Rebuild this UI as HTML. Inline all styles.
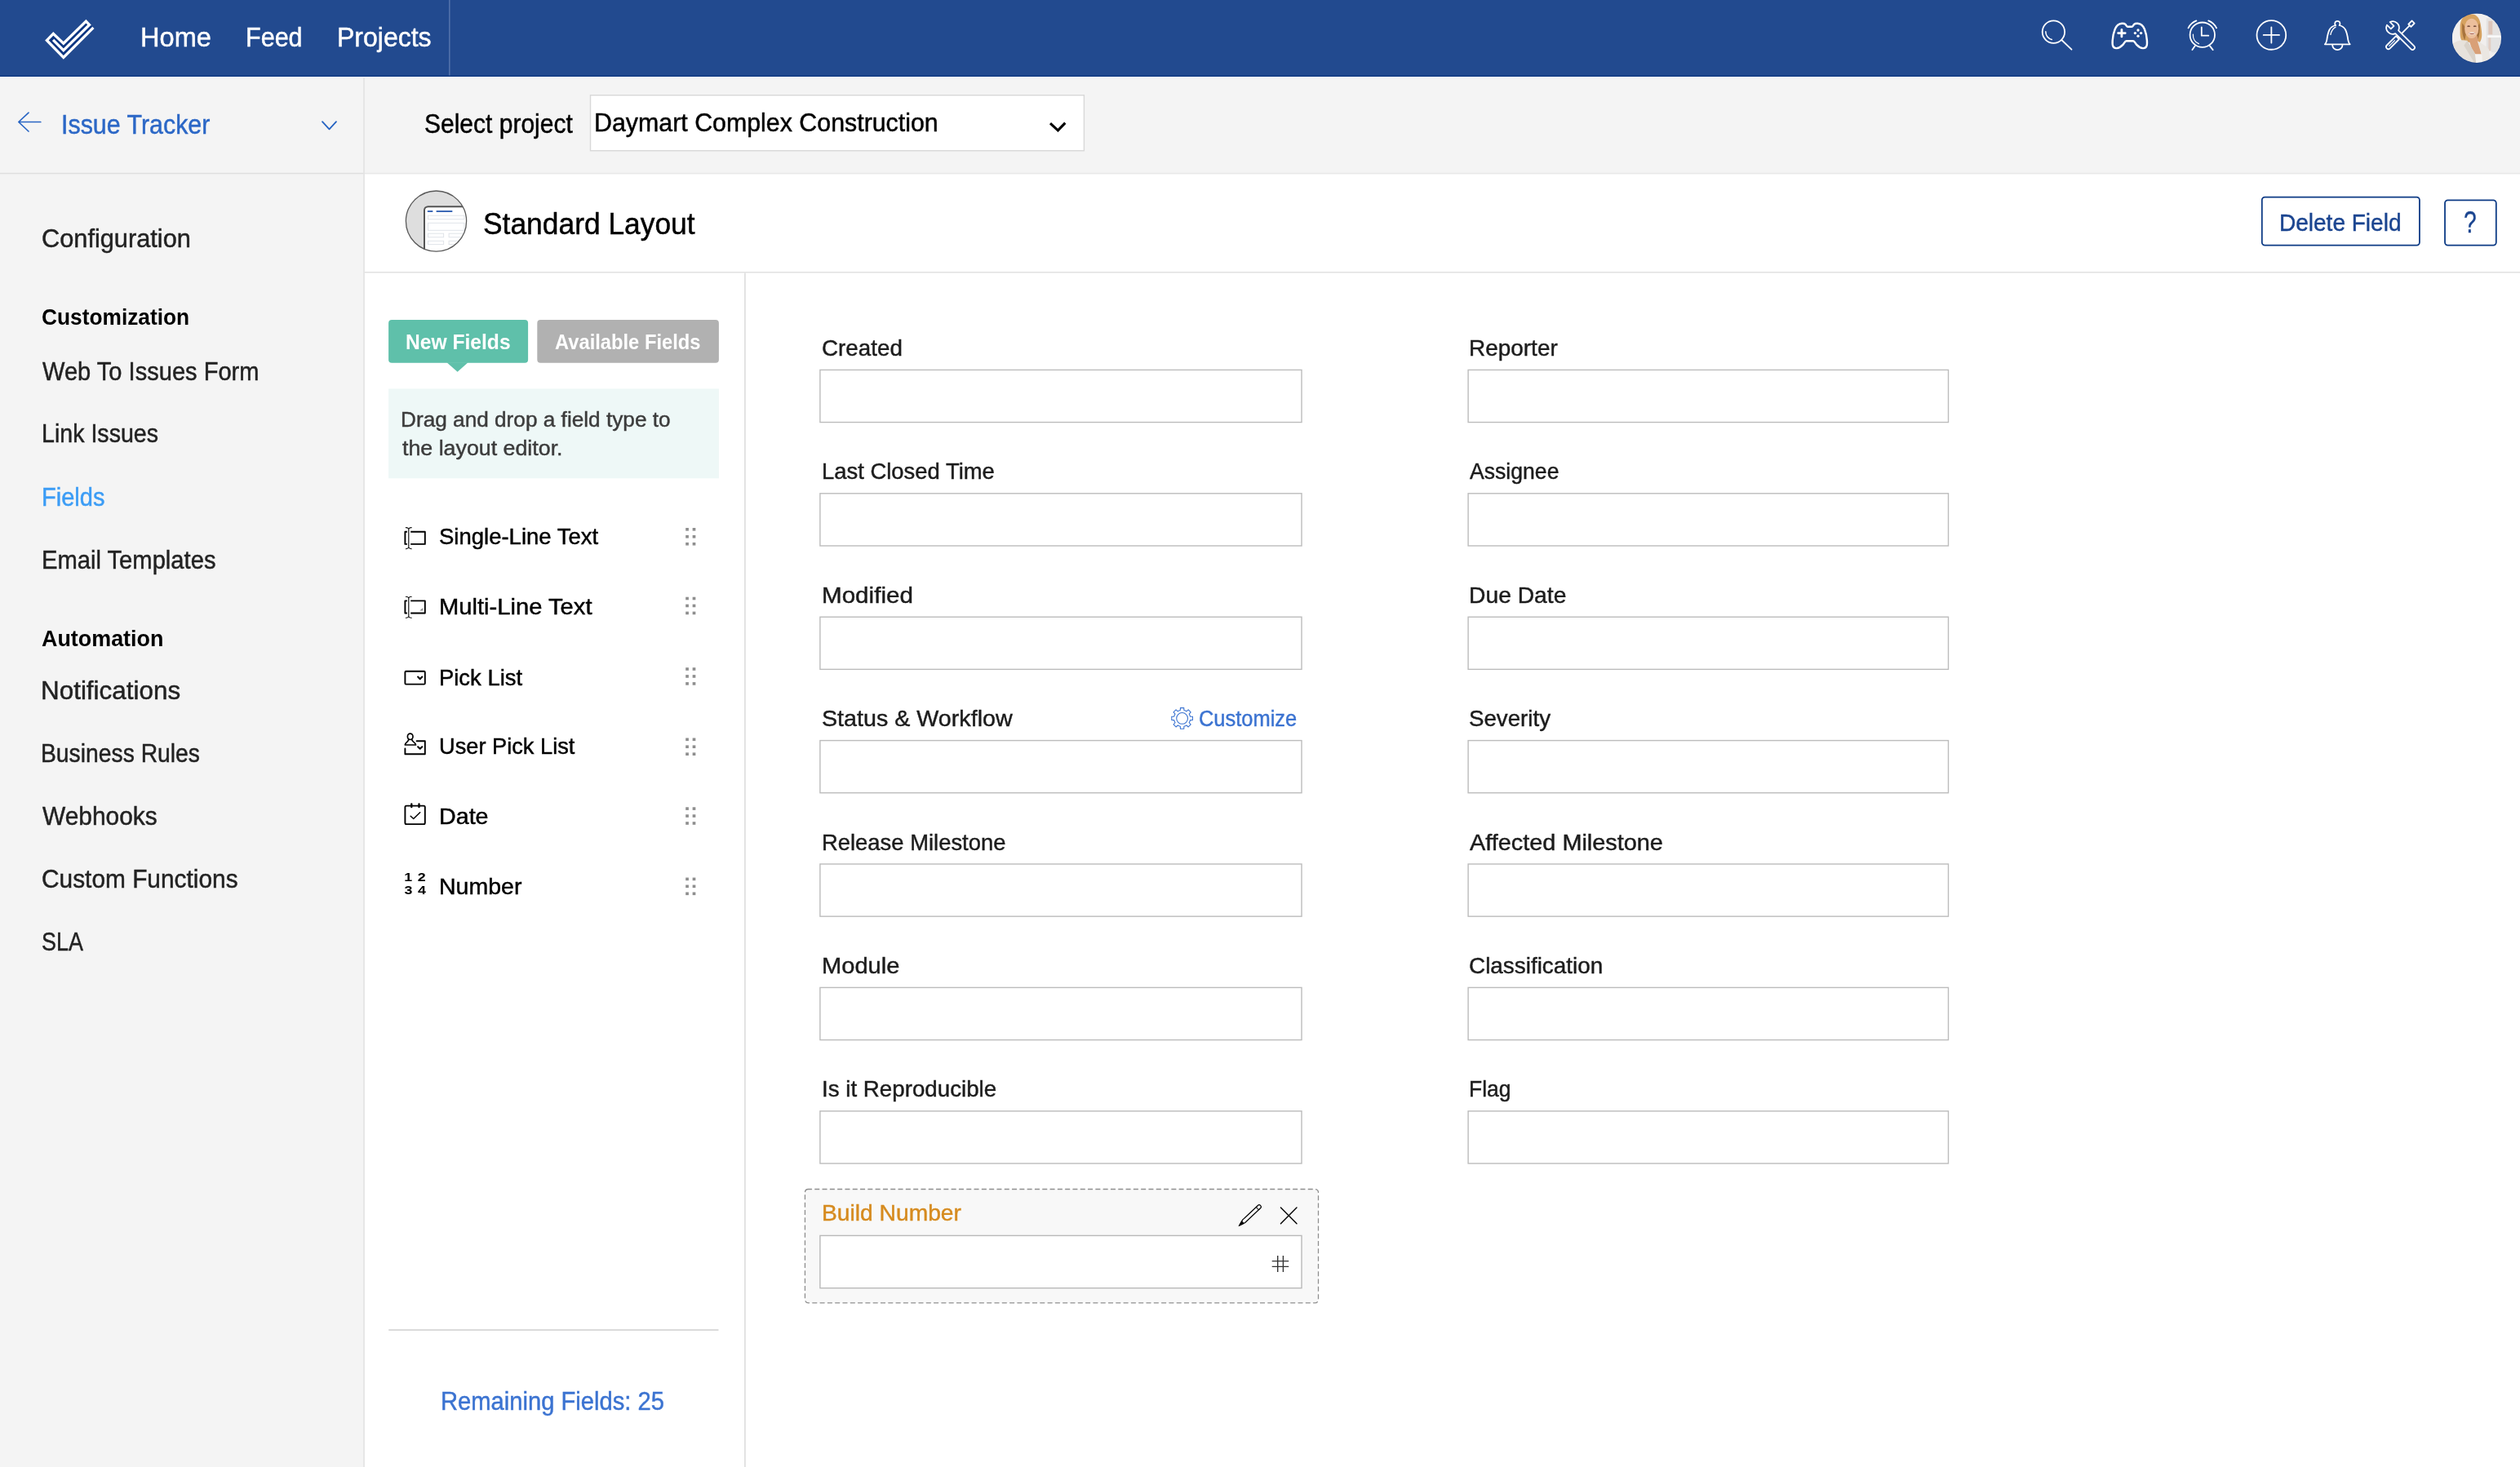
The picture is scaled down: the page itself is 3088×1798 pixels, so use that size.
<!DOCTYPE html>
<html lang="en"><head><meta charset="utf-8"><title>Standard Layout - Issue Tracker</title>
<style>
*{box-sizing:border-box;margin:0;padding:0}
html,body{width:3088px;height:1798px;overflow:hidden;background:#fff}
body{position:relative;font-family:"Liberation Sans",sans-serif}
.t{position:absolute;white-space:nowrap;line-height:1;transform-origin:0 0;-webkit-text-stroke:0.45px currentColor}
.b{-webkit-text-stroke:0}
svg{position:absolute;overflow:visible}
#txt{position:absolute;left:0;top:0;width:3088px;height:1798px;will-change:transform}
ul{list-style:none}
h1,h2{font-size:inherit;font-weight:inherit}
</style></head>
<body>
<svg style="left:0;top:0" width="3088" height="1798" viewBox="0 0 3088 1798" fill="none">
<rect x="0" y="0" width="3088" height="1798" fill="#f4f4f4"/>
<rect x="0" y="0" width="3088" height="94" fill="#224a8f"/>
<rect x="0" y="92.4" width="3088" height="1.6" fill="#123b84"/>
<rect x="0" y="94" width="3088" height="1.3" fill="#fdfdfd"/>
<rect x="550.1" y="0" width="1.4" height="92.4" fill="#5877ae"/>
<rect x="446.8" y="213.3" width="2642" height="1585" fill="#fff"/>
<rect x="0" y="211.8" width="446" height="1.5" fill="#dfdfdf"/>
<rect x="446" y="211.8" width="2642" height="1.5" fill="#e8e8e8"/>
<rect x="445.2" y="95.3" width="1.6" height="1703" fill="#e3e3e3"/>
<rect x="446.8" y="333" width="2642" height="1.5" fill="#e1e1e1"/>
<rect x="912.1" y="334.5" width="1.6" height="1464" fill="#dddddd"/>
<rect x="723.5" y="116.7" width="604.9" height="68" fill="#fff" stroke="#d8d8d8" stroke-width="1.4"/>
<rect x="2771.8" y="241.7" width="193.1" height="58.9" rx="3.6" fill="#fff" stroke="#0d3b85" stroke-width="1.8"/>
<rect x="2996" y="245.3" width="62.8" height="55.3" rx="3.6" fill="#fff" stroke="#0d3b85" stroke-width="1.8"/>
<rect x="476.1" y="391.9" width="171" height="52.8" rx="4" fill="#5fc0aa"/>
<path d="M547.5 444.2 L573.5 444.2 L560.6 455.8 Z" fill="#5fc0aa"/>
<rect x="658.3" y="391.9" width="222.6" height="52.8" rx="4" fill="#b1b1b1"/>
<rect x="476.1" y="476.4" width="404.8" height="109.9" fill="#eef8f7"/>
<rect x="476.2" y="1629.3" width="404.3" height="1.5" fill="#cfcfcf"/>
<rect x="1004.9" y="453.40" width="590.1" height="64.15" fill="#fff" stroke="#bcbcbc" stroke-width="1.4"/>
<rect x="1799.1" y="453.40" width="588.4" height="64.15" fill="#fff" stroke="#bcbcbc" stroke-width="1.4"/>
<rect x="1004.9" y="604.80" width="590.1" height="64.15" fill="#fff" stroke="#bcbcbc" stroke-width="1.4"/>
<rect x="1799.1" y="604.80" width="588.4" height="64.15" fill="#fff" stroke="#bcbcbc" stroke-width="1.4"/>
<rect x="1004.9" y="756.20" width="590.1" height="64.15" fill="#fff" stroke="#bcbcbc" stroke-width="1.4"/>
<rect x="1799.1" y="756.20" width="588.4" height="64.15" fill="#fff" stroke="#bcbcbc" stroke-width="1.4"/>
<rect x="1004.9" y="907.60" width="590.1" height="64.15" fill="#fff" stroke="#bcbcbc" stroke-width="1.4"/>
<rect x="1799.1" y="907.60" width="588.4" height="64.15" fill="#fff" stroke="#bcbcbc" stroke-width="1.4"/>
<rect x="1004.9" y="1059.00" width="590.1" height="64.15" fill="#fff" stroke="#bcbcbc" stroke-width="1.4"/>
<rect x="1799.1" y="1059.00" width="588.4" height="64.15" fill="#fff" stroke="#bcbcbc" stroke-width="1.4"/>
<rect x="1004.9" y="1210.40" width="590.1" height="64.15" fill="#fff" stroke="#bcbcbc" stroke-width="1.4"/>
<rect x="1799.1" y="1210.40" width="588.4" height="64.15" fill="#fff" stroke="#bcbcbc" stroke-width="1.4"/>
<rect x="1004.9" y="1361.80" width="590.1" height="64.15" fill="#fff" stroke="#bcbcbc" stroke-width="1.4"/>
<rect x="1799.1" y="1361.80" width="588.4" height="64.15" fill="#fff" stroke="#bcbcbc" stroke-width="1.4"/>
<rect x="986.45" y="1457.5" width="629.05" height="139.4" rx="4" fill="#f8f8f8" stroke="#8f8f8f" stroke-width="1.3" stroke-dasharray="6 3.3" stroke-dashoffset="1.5"/>
<rect x="1004.9" y="1514.4" width="590.1" height="64.3" fill="#fff" stroke="#b9b9b9" stroke-width="1.4"/>
</svg>
<svg style="left:0;top:0;will-change:transform" width="3088" height="1798" viewBox="0 0 3088 1798" fill="none" stroke-linecap="round" stroke-linejoin="round">
<polygon points="114.4,33.9 77.8,70.4 57.4,49.4 65.3,41.4 77.8,53.3 105.4,26.1 109.5,30.4" fill="#0d3682"/>
<polyline points="114.4,33.9 77.8,70.4 57.4,49.4 65.3,41.4 77.8,53.3 105.4,26.1 109.5,30.4 77.8,61.6 65.05,48.9" stroke="#fff" stroke-width="3.3" stroke-linejoin="miter" stroke-linecap="butt" stroke-miterlimit="10"/>
<g stroke="#fff" stroke-width="1.8">
<circle cx="2516.4" cy="39.1" r="13.7"/><path d="M2526.3 49 L2538.5 60.7"/><path d="M2506.8 38.8 A9.6 9.6 0 0 0 2514.3 48.4" stroke-width="1.5"/>
<path stroke-width="2.4" d="M2600.1 28.8 C2602 28.6 2603.5 28.9 2604.5 29.8 C2605.5 30.8 2606 32.8 2607.5 32.8 L2612.1 32.8 C2613.6 32.8 2614.1 30.8 2615.1 29.8 C2616.1 28.9 2617.6 28.6 2619.5 28.8 C2623.5 29.2 2626.3 31.8 2627.9 35.8 C2629.6 40 2630.6 45 2630.9 49.7 C2631.1 52.6 2631.2 54.8 2630.4 56.6 C2629.6 58.4 2627.9 59.3 2625.9 59.1 C2622.9 58.8 2620.2 56.9 2618 54.6 C2616.5 53 2615.7 50.2 2614 50.2 L2605.6 50.2 C2603.9 50.2 2603.1 53 2601.6 54.6 C2599.4 56.9 2596.7 58.8 2593.7 59.1 C2591.7 59.3 2590 58.4 2589.2 56.6 C2588.4 54.8 2588.5 52.6 2588.7 49.7 C2589 45 2590 40 2591.7 35.8 C2593.3 31.8 2596.1 29.2 2600.1 28.8 Z"/>
<path stroke-width="2.8" d="M2595.6 40.6 L2604.2 40.6 M2599.9 36.3 L2599.9 44.9"/>
<g fill="#fff" stroke="none"><circle cx="2620" cy="37" r="1.65"/><circle cx="2620" cy="44.2" r="1.65"/><circle cx="2616.4" cy="40.6" r="1.65"/><circle cx="2623.6" cy="40.6" r="1.65"/></g>
<circle cx="2698.8" cy="42.7" r="15.2"/><path d="M2681.5 34.3 A19 19 0 0 1 2691.4 25.4 M2706.2 25.4 A19 19 0 0 1 2716.1 34.3"/>
<path d="M2689.6 56.4 L2686.4 61.1 M2708 56.4 L2711.7 61.1 M2697.8 33.3 L2697.8 43.7 L2706.3 43.7"/><path d="M2687.4 42.2 A11.5 11.5 0 0 0 2694.4 53.7" stroke-width="1.3"/>
<circle cx="2783.35" cy="42.9" r="17.85" stroke-width="1.8"/><path stroke-width="1.8" d="M2773.7 42.9 L2793 42.9 M2783.35 33.3 L2783.35 52.6"/>
<path d="M2861.9 31 C2858 32 2855.8 33.8 2854.5 36.5 C2852.5 40.5 2851.8 45 2851.3 49 C2851 51.3 2850.6 52.3 2848.9 54.3 L2879.7 54.3 C2878 52.3 2877.6 51.3 2877.3 49 C2876.8 45 2876.1 40.5 2874.1 36.5 C2872.8 33.8 2870.6 32 2866.7 31"/>
<path d="M2861.9 31 C2860.6 29.5 2860.8 25.9 2864.3 25.9 C2867.8 25.9 2868 29.5 2866.7 31"/>
<path d="M2858.1 55.1 A6.2 6 0 0 0 2870.5 55.1"/><path stroke-width="1.4" d="M2862 33.2 C2858.3 35.4 2856.6 39 2855.9 42.4"/>
<g transform="translate(2926.7 57.4) rotate(-45)"><path d="M0 -2.7 L16 -2.7 L16 2.7 L0 2.7 A2.7 2.7 0 0 1 0 -2.7 Z"/><path stroke-width="1.2" d="M1.5 0 L11 0"/><path d="M16 0 L37 0"/><rect x="37" y="-2.2" width="6" height="4.4"/></g>
<g transform="translate(2932 34) rotate(45)"><path fill="#224a8f" d="M-7.36 -2.6 L-0.5 -2.6 L-0.5 2.6 L-7.36 2.6 A7.8 7.8 0 0 0 7.32 2.7 L34.3 2.7 A2.7 2.7 0 0 0 34.3 -2.7 L7.32 -2.7 A7.8 7.8 0 0 0 -7.36 -2.6 Z"/></g>
</g>
<defs><filter id="bl" x="-5%" y="-5%" width="110%" height="110%"><feGaussianBlur stdDeviation="0.55"/></filter><clipPath id="av"><circle cx="3034.9" cy="46.7" r="30.2"/></clipPath><clipPath id="lay"><circle cx="534.5" cy="271.1" r="37.5"/></clipPath></defs>
<circle cx="3034.9" cy="46.7" r="31" fill="#1a4187" stroke="none"/>
<g clip-path="url(#av)" stroke="none"><g transform="translate(3004.8 16.3)" filter="url(#bl)">
<rect x="0" y="0" width="61" height="61" fill="#f1efee"/>
<rect x="42" y="6" width="19" height="40" fill="#e4e2e1"/><rect x="44.5" y="9.5" width="5" height="16.5" fill="#dcc6ba"/><rect x="43" y="27" width="18" height="2.6" fill="#fafafa"/><rect x="44.5" y="30" width="3" height="16" fill="#e2cfc4"/><rect x="48" y="30" width="13" height="18" fill="#e3e3e3"/>
<path d="M23 1 C14 1 9.5 8 9.8 18 C10 26 9 31 13.5 35.5 L34 35.5 C37.5 30 36.5 24 35.5 17 C34.5 7 31 1 23 1 Z" fill="#d6a260"/>
<path d="M12.5 12 C11.5 20 12.5 28 15.5 33 L18 20 Z" fill="#a8733c"/><path d="M33.5 12 C34.5 20 33.5 28 31 33 L29.5 20 Z" fill="#9c6a38"/>
<path d="M19 28 L31 28 L36.5 52 L27 52 Z" fill="#d9a077"/>
<ellipse cx="23.9" cy="18.6" rx="8.6" ry="12.2" fill="#ecbf9c"/>
<ellipse cx="24.3" cy="24.6" rx="4.3" ry="1.7" fill="#f7efe9"/><path d="M19.6 23.6 Q24.3 28.5 29 23.6 Q24.3 25.4 19.6 23.6Z" fill="#b06a55"/>
<ellipse cx="20.3" cy="15.9" rx="1.9" ry="0.9" fill="#7a5140"/><ellipse cx="27.9" cy="15.9" rx="1.9" ry="0.9" fill="#7a5140"/>
<path d="M0 38 C6 33 12 32 18.5 33.5 L29 51 L31 61 L0 61 Z" fill="#e7e2dc"/><path d="M31 34 C35 36 40 39 45 44 L47 61 L36 61 L36.5 52 Z" fill="#ebe7e2"/>
<path d="M14.5 39.5 L18.5 33.5 L29 51 L30 61 L27.5 61 Z" fill="#d9d2c9"/><path d="M28 50 L36.5 50 L37 61 L29.5 61 Z" fill="#f4f3f1"/>
</g></g>
<path d="M35 138.1 L22.8 149.5 L35 161 M23.6 149.5 L49.8 149.5" stroke="#2a66c4" stroke-width="1.7"/>
<path d="M395 149.2 L403.5 158.4 L412 149.2" stroke="#2563c2" stroke-width="1.8"/>
<path d="M1287 151.2 L1296.4 159.9 L1305.3 150.6" stroke="#000" stroke-width="3.1" stroke-linecap="butt" stroke-linejoin="miter"/>
<circle cx="534.5" cy="271.1" r="37.5" fill="#dedede" stroke="none"/>
<g clip-path="url(#lay)"><rect x="520" y="253.2" width="80" height="80" rx="4.5" fill="#fff" stroke="#555" stroke-width="2"/>
<path d="M524.6 259 L529.6 259 M535.4 259 L553.6 259" stroke="#3d69b6" stroke-width="1.9"/>
<g stroke="#e0e4e9" stroke-width="1" stroke-linejoin="miter"><rect x="524.5" y="264.2" width="44.4" height="4.5"/><rect x="524.5" y="273.3" width="44.4" height="9"/><rect x="524.5" y="286.2" width="19.1" height="4.5"/><rect x="550.1" y="286.2" width="25" height="4.5"/><rect x="524.5" y="295.3" width="19.1" height="4.3"/><rect x="550.1" y="295.3" width="25" height="4.3"/></g></g>
<circle cx="534.5" cy="271.1" r="37.1" stroke="#5a5a5a" stroke-width="1.3"/>
<g stroke="#000" stroke-width="1.9" transform="translate(0 0.0)"><path d="M498.9 651.8 L496.4 651.8 L496.4 666.9 L498.9 666.9 M503.2 651.8 L520.8 651.8 L520.8 666.9 L503.2 666.9" stroke-linecap="butt"/><path stroke-width="1.1" d="M500.8 648 L500.8 671.3 M497.4 646.6 Q500 646.7 500.8 648.2 Q501.6 646.7 504.2 646.6 M497.4 672.7 Q500 672.6 500.8 671.1 Q501.6 672.6 504.2 672.7"/></g>
<g stroke="#000" stroke-width="1.9" transform="translate(0 84.6)"><path d="M498.9 651.8 L496.4 651.8 L496.4 666.9 L498.9 666.9 M503.2 651.8 L520.8 651.8 L520.8 666.9 L503.2 666.9" stroke-linecap="butt"/><path stroke-width="1.1" d="M500.8 648 L500.8 671.3 M497.4 646.6 Q500 646.7 500.8 648.2 Q501.6 646.7 504.2 646.6 M497.4 672.7 Q500 672.6 500.8 671.1 Q501.6 672.6 504.2 672.7"/><path d="M518.2 660.3 L518.2 663.9 L514.3 663.9 Z" fill="#8a8a8a" stroke="none"/></g>
<g stroke="#000" stroke-width="1.9">
<rect x="496.4" y="822.7" width="24.4" height="15.9" rx="1.2"/><path stroke-width="2" d="M512.1 829.5 L514.7 832.2 L517.3 829.5"/>
<ellipse cx="502.7" cy="902.8" rx="3.3" ry="3.7" stroke-width="1.7"/><path stroke-width="1.7" d="M500.8 906 C500.9 909.6 496.9 909 496.3 913 L509.5 913 C508.9 909 504.5 909.6 504.6 906"/>
<path d="M510.6 908.2 L520.8 908.2 L520.8 924.3 L496.4 924.3 L496.4 917.5"/><path stroke-width="2" d="M512.1 915.2 L514.7 917.8 L517.3 915.2"/>
<rect x="496.4" y="987.6" width="24.4" height="22.5" rx="1.6"/><path stroke-width="2.3" d="M504.3 985.4 L504.3 989.2 M513.5 985.4 L513.5 989.2"/><path stroke-width="1.5" d="M503.2 1000.3 L506.7 1003.5 L514.7 995.8"/>
</g>
<g fill="#000" stroke="none" font-family="Liberation Sans, sans-serif" font-weight="700" font-size="15.4" text-anchor="middle">
<text transform="translate(500.3 1079.6) scale(1.16 0.9)">1</text>
<text transform="translate(516.75 1079.6) scale(1.16 0.9)">2</text>
<text transform="translate(500.4 1095.6) scale(1.16 0.9)">3</text>
<text transform="translate(516.85 1095.6) scale(1.16 0.9)">4</text>
</g>
<g fill="#8e8e8e" stroke="none">
<rect x="840.20" y="647.00" width="3.7" height="3.6"/>
<rect x="848.65" y="647.00" width="3.7" height="3.6"/>
<rect x="840.20" y="655.95" width="3.7" height="3.6"/>
<rect x="848.65" y="655.95" width="3.7" height="3.6"/>
<rect x="840.20" y="664.90" width="3.7" height="3.6"/>
<rect x="848.65" y="664.90" width="3.7" height="3.6"/>
<rect x="840.20" y="731.70" width="3.7" height="3.6"/>
<rect x="848.65" y="731.70" width="3.7" height="3.6"/>
<rect x="840.20" y="740.65" width="3.7" height="3.6"/>
<rect x="848.65" y="740.65" width="3.7" height="3.6"/>
<rect x="840.20" y="749.60" width="3.7" height="3.6"/>
<rect x="848.65" y="749.60" width="3.7" height="3.6"/>
<rect x="840.20" y="818.20" width="3.7" height="3.6"/>
<rect x="848.65" y="818.20" width="3.7" height="3.6"/>
<rect x="840.20" y="827.15" width="3.7" height="3.6"/>
<rect x="848.65" y="827.15" width="3.7" height="3.6"/>
<rect x="840.20" y="836.10" width="3.7" height="3.6"/>
<rect x="848.65" y="836.10" width="3.7" height="3.6"/>
<rect x="840.20" y="904.50" width="3.7" height="3.6"/>
<rect x="848.65" y="904.50" width="3.7" height="3.6"/>
<rect x="840.20" y="913.45" width="3.7" height="3.6"/>
<rect x="848.65" y="913.45" width="3.7" height="3.6"/>
<rect x="840.20" y="922.40" width="3.7" height="3.6"/>
<rect x="848.65" y="922.40" width="3.7" height="3.6"/>
<rect x="840.20" y="989.30" width="3.7" height="3.6"/>
<rect x="848.65" y="989.30" width="3.7" height="3.6"/>
<rect x="840.20" y="998.25" width="3.7" height="3.6"/>
<rect x="848.65" y="998.25" width="3.7" height="3.6"/>
<rect x="840.20" y="1007.20" width="3.7" height="3.6"/>
<rect x="848.65" y="1007.20" width="3.7" height="3.6"/>
<rect x="840.20" y="1075.60" width="3.7" height="3.6"/>
<rect x="848.65" y="1075.60" width="3.7" height="3.6"/>
<rect x="840.20" y="1084.55" width="3.7" height="3.6"/>
<rect x="848.65" y="1084.55" width="3.7" height="3.6"/>
<rect x="840.20" y="1093.50" width="3.7" height="3.6"/>
<rect x="848.65" y="1093.50" width="3.7" height="3.6"/>
</g>
<path d="M1446.33 870.56 L1446.45 867.58 L1450.75 867.58 L1450.87 870.56 A10.1 10.1 0 0 1 1453.95 871.83 L1456.15 869.82 L1459.18 872.85 L1457.17 875.05 A10.1 10.1 0 0 1 1458.44 878.13 L1461.42 878.25 L1461.42 882.55 L1458.44 882.67 A10.1 10.1 0 0 1 1457.17 885.75 L1459.18 887.95 L1456.15 890.98 L1453.95 888.97 A10.1 10.1 0 0 1 1450.87 890.24 L1450.75 893.22 L1446.45 893.22 L1446.33 890.24 A10.1 10.1 0 0 1 1443.25 888.97 L1441.05 890.98 L1438.02 887.95 L1440.03 885.75 A10.1 10.1 0 0 1 1438.76 882.67 L1435.78 882.55 L1435.78 878.25 L1438.76 878.13 A10.1 10.1 0 0 1 1440.03 875.05 L1438.02 872.85 L1441.05 869.82 L1443.25 871.83 A10.1 10.1 0 0 1 1446.33 870.56Z" stroke="#3b73d1" stroke-width="1.1"/><circle cx="1448.6" cy="880.4" r="6.9" stroke="#3b73d1" stroke-width="1.1"/>
<g transform="translate(1518.8 1501.9) rotate(-43.3)" stroke="#000" stroke-width="1.2"><path d="M0 0 L7.4 -2.3 L33.2 -2.3 A2.3 2.3 0 0 1 33.2 2.3 L7.4 2.3 Z" stroke-linejoin="miter"/><path d="M0 0 L5.4 -1.7 L5.4 1.7 Z" fill="#000"/><path d="M31.3 -2.3 A1.2 2.3 0 0 0 31.3 2.3" stroke-width="1"/></g>
<path d="M1569.4 1480 L1589 1499.8 M1589 1480 L1569.4 1499.8" stroke="#000" stroke-width="1.4"/>
<path d="M1565.7 1538.9 L1565.7 1559 M1572.4 1538.9 L1572.4 1559 M1558.7 1545.6 L1579.2 1545.6 M1558.7 1552.4 L1579.2 1552.4" stroke="#333" stroke-width="1.4" stroke-linecap="butt"/>
</svg>
<div id="txt">
<nav><a class="t" style="left:171.51px;top:29.07px;font-size:33px;font-weight:400;color:#ffffff;transform:scaleX(0.9875)">Home</a><a class="t" style="left:300.93px;top:29.07px;font-size:33px;font-weight:400;color:#ffffff;transform:scaleX(0.9251)">Feed</a><a class="t" style="left:413.31px;top:29.07px;font-size:33px;font-weight:400;color:#ffffff;transform:scaleX(0.9694)">Projects</a></nav>
<aside><a class="t" style="left:75.14px;top:135.87px;font-size:33px;font-weight:400;color:#2b67c6;transform:scaleX(0.9207)">Issue Tracker</a><a class="t" style="left:50.81px;top:277.10px;font-size:30.6px;font-weight:400;color:#222222;transform:scaleX(1.0048)">Configuration</a><h2><span class="t b" style="left:50.85px;top:375.20px;font-size:28px;font-weight:700;color:#000000;transform:scaleX(0.9392)">Customization</span></h2><a class="t" style="left:52.20px;top:439.50px;font-size:30.6px;font-weight:400;color:#222222;transform:scaleX(0.9502)">Web To Issues Form</a><a class="t" style="left:50.69px;top:516.40px;font-size:30.6px;font-weight:400;color:#222222;transform:scaleX(0.9346)">Link Issues</a><a class="t" style="left:50.66px;top:593.50px;font-size:30.6px;font-weight:400;color:#3b9cf5;transform:scaleX(0.9484)">Fields</a><a class="t" style="left:50.64px;top:670.60px;font-size:30.6px;font-weight:400;color:#222222;transform:scaleX(0.9536)">Email Templates</a><h2><span class="t b" style="left:51.03px;top:769.00px;font-size:28px;font-weight:700;color:#000000;transform:scaleX(0.9604)">Automation</span></h2><a class="t" style="left:50.16px;top:830.70px;font-size:30.6px;font-weight:400;color:#222222;transform:scaleX(1.0270)">Notifications</a><a class="t" style="left:50.42px;top:907.90px;font-size:30.6px;font-weight:400;color:#222222;transform:scaleX(0.9247)">Business Rules</a><a class="t" style="left:52.00px;top:984.70px;font-size:30.6px;font-weight:400;color:#222222;transform:scaleX(0.9774)">Webhooks</a><a class="t" style="left:50.66px;top:1062.10px;font-size:30.6px;font-weight:400;color:#222222;transform:scaleX(0.9757)">Custom Functions</a><a class="t" style="left:50.94px;top:1139.30px;font-size:30.6px;font-weight:400;color:#222222;transform:scaleX(0.8797)">SLA</a></aside>
<header><label class="t" style="left:519.70px;top:135.99px;font-size:32.5px;font-weight:400;color:#000000;transform:scaleX(0.9233)">Select project</label><span class="t" style="left:728.05px;top:134.56px;font-size:31px;font-weight:400;color:#000000;transform:scaleX(0.9792)">Daymart Complex Construction</span><h1><span class="t" style="left:592.46px;top:256.53px;font-size:36px;font-weight:400;color:#000000;transform:scaleX(0.9827)">Standard Layout</span></h1><span class="t" style="left:2792.94px;top:258.55px;font-size:29px;font-weight:400;color:#1b4590;transform:scaleX(0.9660)">Delete Field</span><span class="t" style="left:3018.62px;top:255.03px;font-size:36px;font-weight:400;color:#1b4590;transform:scaleX(0.7813)">?</span></header>
<section><a class="t b" style="left:497.04px;top:405.77px;font-size:26.5px;font-weight:700;color:#ffffff;transform:scaleX(0.9288)">New Fields</a><a class="t b" style="left:679.51px;top:405.77px;font-size:26.5px;font-weight:700;color:#ffffff;transform:scaleX(0.8954)">Available Fields</a><p><span class="t" style="left:490.89px;top:502.24px;font-size:25.7px;font-weight:400;color:#3c3c3c;transform:scaleX(1.0199)">Drag and drop a field type to</span><span class="t" style="left:492.65px;top:537.44px;font-size:25.7px;font-weight:400;color:#3c3c3c;transform:scaleX(1.0426)">the layout editor.</span></p><ul><li><span class="t" style="left:538.41px;top:644.14px;font-size:27.6px;font-weight:400;color:#000000;transform:scaleX(0.9967)">Single-Line Text</span></li><li><span class="t" style="left:537.64px;top:729.94px;font-size:27.6px;font-weight:400;color:#000000;transform:scaleX(1.0571)">Multi-Line Text</span></li><li><span class="t" style="left:537.79px;top:816.84px;font-size:27.6px;font-weight:400;color:#000000;transform:scaleX(0.9934)">Pick List</span></li><li><span class="t" style="left:537.94px;top:901.14px;font-size:27.6px;font-weight:400;color:#000000;transform:scaleX(0.9864)">User Pick List</span></li><li><span class="t" style="left:537.69px;top:987.44px;font-size:27.6px;font-weight:400;color:#000000;transform:scaleX(1.0386)">Date</span></li><li><span class="t" style="left:537.70px;top:1072.74px;font-size:27.6px;font-weight:400;color:#000000;transform:scaleX(1.0333)">Number</span></li></ul><p><span class="t" style="left:540.34px;top:1701.50px;font-size:30.6px;font-weight:400;color:#3b73d1;transform:scaleX(0.9529)">Remaining Fields: 25</span></p></section>
<main><label class="t" style="left:1006.66px;top:412.90px;font-size:28px;font-weight:400;color:#1c1c1c;transform:scaleX(0.9921)">Created</label><label class="t" style="left:1006.99px;top:564.30px;font-size:28px;font-weight:400;color:#1c1c1c;transform:scaleX(0.9793)">Last Closed Time</label><label class="t" style="left:1007.01px;top:715.70px;font-size:28px;font-weight:400;color:#1c1c1c;transform:scaleX(1.0572)">Modified</label><label class="t" style="left:1006.76px;top:867.10px;font-size:28px;font-weight:400;color:#1c1c1c;transform:scaleX(1.0239)">Status &amp; Workflow</label><label class="t" style="left:1007.09px;top:1018.50px;font-size:28px;font-weight:400;color:#1c1c1c;transform:scaleX(0.9788)">Release Milestone</label><label class="t" style="left:1007.05px;top:1169.90px;font-size:28px;font-weight:400;color:#1c1c1c;transform:scaleX(1.0389)">Module</label><label class="t" style="left:1006.79px;top:1321.30px;font-size:28px;font-weight:400;color:#1c1c1c;transform:scaleX(0.9900)">Is it Reproducible</label><label class="t" style="left:1799.64px;top:412.90px;font-size:28px;font-weight:400;color:#1c1c1c;transform:scaleX(0.9982)">Reporter</label><label class="t" style="left:1801.28px;top:564.30px;font-size:28px;font-weight:400;color:#1c1c1c;transform:scaleX(0.9500)">Assignee</label><label class="t" style="left:1799.82px;top:715.70px;font-size:28px;font-weight:400;color:#1c1c1c;transform:scaleX(1.0093)">Due Date</label><label class="t" style="left:1799.80px;top:867.10px;font-size:28px;font-weight:400;color:#1c1c1c;transform:scaleX(0.9888)">Severity</label><label class="t" style="left:1800.98px;top:1018.50px;font-size:28px;font-weight:400;color:#1c1c1c;transform:scaleX(1.0308)">Affected Milestone</label><label class="t" style="left:1799.66px;top:1169.90px;font-size:28px;font-weight:400;color:#1c1c1c;transform:scaleX(0.9959)">Classification</label><label class="t" style="left:1800.07px;top:1321.30px;font-size:28px;font-weight:400;color:#1c1c1c;transform:scaleX(0.9444)">Flag</label><a class="t" style="left:1468.98px;top:868.14px;font-size:27px;font-weight:400;color:#3b73d1;transform:scaleX(0.9423)">Customize</a><label class="t" style="left:1007.32px;top:1473.00px;font-size:28px;font-weight:400;color:#d68b1f;transform:scaleX(1.0079)">Build Number</label></main>
</div>
</body></html>
